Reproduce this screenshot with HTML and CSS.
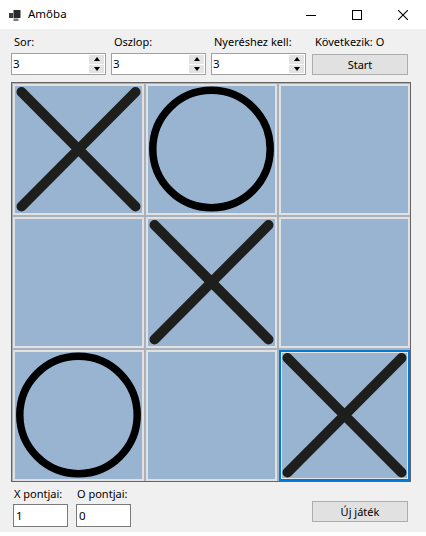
FILE: index.html
```html
<!DOCTYPE html>
<html lang="hu">
<head>
<meta charset="utf-8">
<title>Amőba</title>
<link rel="stylesheet" href="styles.css">
</head>
<body>
<div class="window">
  <div class="titlebar">
    <svg class="appicon" width="12" height="11" viewBox="0 0 12 11">
      <rect x="0" y="3" width="4" height="5" fill="#3c3c3c"/>
      <rect x="4.5" y="0" width="7" height="8" fill="#2b2b2b"/>
      <rect x="4.5" y="8.5" width="5" height="2.5" fill="#7a7a7a"/>
    </svg>
    <span class="title">Amőba</span>
    <div class="caption">
      <div class="cbtn"><svg width="10" height="10" viewBox="0 0 10 10"><line x1="0" y1="5.5" x2="10" y2="5.5" stroke="#000" stroke-width="1"/></svg></div>
      <div class="cbtn"><svg width="10" height="10" viewBox="0 0 10 10"><rect x="0.5" y="0.5" width="9" height="9" fill="none" stroke="#000" stroke-width="1"/></svg></div>
      <div class="cbtn"><svg width="10" height="10" viewBox="0 0 10 10"><path d="M0 0 L10 10 M10 0 L0 10" stroke="#000" stroke-width="1.1"/></svg></div>
    </div>
  </div>
  <div class="client">
    <div class="toprow">
      <div class="field">
        <div class="lbl">Sor:</div>
        <div class="numeric"><span class="val">3</span><div class="spin"><span class="sbtn"><i class="tri up"></i></span><span class="sbtn"><i class="tri down"></i></span></div></div>
      </div>
      <div class="field">
        <div class="lbl">Oszlop:</div>
        <div class="numeric"><span class="val">3</span><div class="spin"><span class="sbtn"><i class="tri up"></i></span><span class="sbtn"><i class="tri down"></i></span></div></div>
      </div>
      <div class="field">
        <div class="lbl">Nyeréshez kell:</div>
        <div class="numeric"><span class="val">3</span><div class="spin"><span class="sbtn"><i class="tri up"></i></span><span class="sbtn"><i class="tri down"></i></span></div></div>
      </div>
      <div class="field status">
        <div class="lbl">Következik: O</div>
        <div class="btn">Start</div>
      </div>
    </div>

    <div class="board">
      <div class="cell"><svg viewBox="0 0 131 131" width="131" height="131"><path class="x" d="M8.5 8 L122.5 122.5 M122.5 8 L8.5 122.5"/></svg></div>
      <div class="cell"><svg viewBox="0 0 131 131" width="131" height="131"><circle class="o" cx="65.5" cy="65" r="58.7"/></svg></div>
      <div class="cell"></div>
      <div class="cell"></div>
      <div class="cell"><svg viewBox="0 0 131 131" width="131" height="131"><path class="x" d="M8.5 8 L122.5 122.5 M122.5 8 L8.5 122.5"/></svg></div>
      <div class="cell"></div>
      <div class="cell"><svg viewBox="0 0 131 131" width="131" height="131"><circle class="o" cx="65.5" cy="65" r="58.7"/></svg></div>
      <div class="cell"></div>
      <div class="cell selected"><svg viewBox="0 0 131 131" width="131" height="131"><path class="x" d="M8.5 8 L122.5 122.5 M122.5 8 L8.5 122.5"/></svg></div>
    </div>

    <div class="bottomrow">
      <div class="sfield">
        <div class="lbl">X pontjai:</div>
        <div class="textbox">1</div>
      </div>
      <div class="sfield">
        <div class="lbl">O pontjai:</div>
        <div class="textbox">0</div>
      </div>
      <div class="btn newgame">Új játék</div>
    </div>
  </div>
  <div class="bottomedge"></div>
</div>
</body>
</html>
```
FILE: styles.css
```css
* { box-sizing: border-box; }
html, body { margin: 0; padding: 0; background: #fff; }
body {
  font-family: "Noto Sans", "Open Sans", sans-serif;
  font-size: 11px;
  color: #000;
}
.window { width: 426px; height: 536px; display: flex; flex-direction: column; }

.titlebar {
  height: 29px;
  background: #fff;
  display: flex;
  align-items: center;
}
.appicon { margin-left: 9px; margin-top: 1px; flex: none; }
.title { margin-left: 7px; font-size: 11.5px; line-height: 16px; margin-top: -1px; }
.caption { margin-left: auto; display: flex; height: 29px; }
.cbtn { width: 46px; height: 29px; display: flex; align-items: center; justify-content: center; }
.cbtn svg { display: block; }

.client {
  background: #f0f0f0;
  height: 503px;
  padding-left: 11px;
}
.bottomedge { height: 4px; background: #fff; }

.toprow { display: flex; padding-top: 5px; }
.field { width: 95px; margin-right: 5px; display: flex; flex-direction: column; }
.field.status { margin-left: 1px; width: 96px; margin-right: 0; }
.lbl { height: 16px; line-height: 16px; padding-left: 3px; margin-bottom: 3px; white-space: nowrap; }

.numeric {
  height: 22px;
  border: 1px solid #a0a0a0;
  background: #fff;
  display: flex;
  align-items: center;
}
.val { padding-left: 1px; flex: 1; line-height: 16px; font-size: 11.5px; }
.spin { width: 15px; height: 18px; margin-right: 1px; display: flex; flex-direction: column; gap: 1px; }
.sbtn {
  flex: 1;
  background: #e3e3e3;
  display: flex;
  align-items: center;
  justify-content: center;
}
.tri { display: block; width: 0; height: 0; border-left: 3.5px solid transparent; border-right: 3.5px solid transparent; }
.tri.up { border-bottom: 4px solid #000; }
.tri.down { border-top: 4px solid #000; }

.btn {
  background: #e1e1e1;
  border: 1px solid #adadad;
  height: 21px;
  margin-top: 1px;
  display: flex;
  align-items: center;
  justify-content: center;
  line-height: 16px;
}

.board {
  margin-top: 7px;
  width: 400px;
  height: 400px;
  border: 1px solid #646464;
  background: #a9b1bb;
  padding: 1px 0 0 1px;
  display: grid;
  grid-template-columns: repeat(3, 131px);
  grid-template-rows: repeat(3, 131px);
  gap: 2px;
}
.cell {
  background: #99b4d1;
  box-shadow: inset 0 0 0 2px #e1e1e1;
}
.cell.selected {
  box-shadow: inset 0 0 0 2px #0078d7, inset 0 0 0 3px #e6e6e6;
}
.cell svg { display: block; }
.x { stroke: #1e1f1d; stroke-width: 10; stroke-linecap: round; fill: none; }
.o { stroke: #000; stroke-width: 7.5; fill: none; }

.bottomrow { display: flex; padding-left: 2px; padding-right: 18px; margin-top: 4px; }
.sfield { width: 55px; margin-right: 8px; display: flex; flex-direction: column; }
.sfield .lbl { padding-left: 1px; margin-bottom: 2px; }
.textbox {
  height: 23px;
  border: 1px solid #7a7a7a;
  background: #fff;
  padding-left: 2px;
  line-height: 21px;
  font-size: 11.5px;
}
.btn.newgame { margin-left: auto; width: 96px; margin-top: 15px; height: 21px; }
```
